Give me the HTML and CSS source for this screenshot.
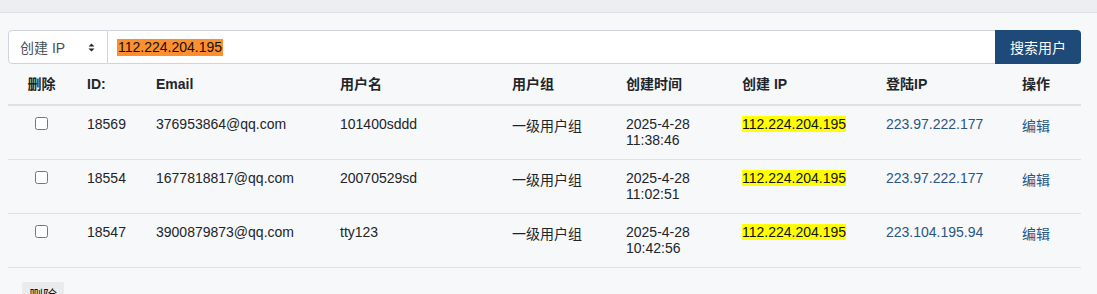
FILE: index.html
```html
<!DOCTYPE html>
<html lang="zh-CN">
<head>
<meta charset="utf-8">
<title>用户管理</title>
<link rel="stylesheet" href="styles.css">
</head>
<body>
<div class="topbar"></div>
<main class="page">
  <form class="search">
    <div class="select">
      <span>创建 IP</span>
      <svg class="caret" width="7" height="9" viewBox="0 0 7 9"><path d="M3.5 0.5 L6.5 3.5 H0.5 Z M3.5 8.5 L6.5 5.5 H0.5 Z" fill="#212529"/></svg>
    </div>
    <div class="input"><span class="picked">112.224.204.195</span></div>
    <button type="button" class="btn-search">搜索用户</button>
  </form>

  <table class="users">
    <colgroup>
      <col class="w-del"><col class="w-id"><col class="w-mail"><col class="w-name"><col class="w-group"><col class="w-time"><col class="w-ip"><col class="w-login"><col class="w-op">
    </colgroup>
    <thead>
      <tr>
        <th class="center">删除</th><th>ID:</th><th>Email</th><th>用户名</th><th>用户组</th><th>创建时间</th><th>创建 IP</th><th>登陆IP</th><th>操作</th>
      </tr>
    </thead>
    <tbody>
      <tr>
        <td class="center"><input type="checkbox" class="chk"></td>
        <td>18569</td><td>376953864@qq.com</td><td>101400sddd</td>
        <td class="cjk">一级用户组</td><td>2025-4-28<br>11:38:46</td>
        <td><mark class="hl">112.224.204.195</mark></td>
        <td class="link">223.97.222.177</td>
        <td class="cjk"><a class="link" href="#">编辑</a></td>
      </tr>
      <tr>
        <td class="center"><input type="checkbox" class="chk"></td>
        <td>18554</td><td>1677818817@qq.com</td><td>20070529sd</td>
        <td class="cjk">一级用户组</td><td>2025-4-28<br>11:02:51</td>
        <td><mark class="hl">112.224.204.195</mark></td>
        <td class="link">223.97.222.177</td>
        <td class="cjk"><a class="link" href="#">编辑</a></td>
      </tr>
      <tr>
        <td class="center"><input type="checkbox" class="chk"></td>
        <td>18547</td><td>3900879873@qq.com</td><td>tty123</td>
        <td class="cjk">一级用户组</td><td>2025-4-28<br>10:42:56</td>
        <td><mark class="hl">112.224.204.195</mark></td>
        <td class="link">223.104.195.94</td>
        <td class="cjk"><a class="link" href="#">编辑</a></td>
      </tr>
    </tbody>
  </table>

  <div class="actions">
    <button type="button" class="btn-del">删除</button>
  </div>
</main>
</body>
</html>
```

FILE: styles.css
```css
* { box-sizing: border-box; }
html, body { margin: 0; padding: 0; }
body {
  background: #f7f8fa;
  font-family: "Liberation Sans", "Noto Sans CJK SC", sans-serif;
  font-size: 14px;
  color: #212529;
  overflow: hidden;
}
.topbar {
  height: 13px;
  background: #eceef1;
  border-bottom: 1px solid #dde0e4;
}
.page {
  padding: 17px 16px 0 8px;
}
.search {
  display: flex;
  height: 34px;
  margin: 0;
}
.select {
  width: 100px;
  display: flex;
  align-items: center;
  justify-content: space-between;
  padding: 0 12px 0 11px;
  background: #fff;
  border: 1px solid #ced4da;
  border-radius: 4px 0 0 4px;
  color: #495057;
}
.caret { display: block; }
.input {
  flex: 1;
  display: flex;
  align-items: center;
  padding: 0 9px;
  background: #fff;
  border: 1px solid #ced4da;
  border-left: none;
  border-right: none;
}
.picked {
  background: #fd8f2f;
  color: #111;
  padding: 0 1px;
  line-height: 17px;
}
.btn-search {
  width: 86px;
  border: none;
  border-radius: 0 4px 4px 0;
  background: #1e4a7a;
  color: #fff;
  font: inherit;
  padding: 0;
}
.users {
  width: 1073px;
  border-collapse: collapse;
  table-layout: fixed;
}
.w-del { width: 67px; }
.w-id { width: 69px; }
.w-mail { width: 184px; }
.w-name { width: 172px; }
.w-group { width: 114px; }
.w-time { width: 116px; }
.w-ip { width: 144px; }
.w-login { width: 136px; }
.w-op { width: 71px; }
.users th {
  text-align: left;
  font-weight: bold;
  padding: 12px 12px;
  line-height: 16px;
  border-bottom: 2px solid #dee2e6;
  vertical-align: middle;
}
.users td {
  padding: 10px 12px 11px;
  line-height: 16px;
  border-bottom: 1px solid #dee2e6;
  vertical-align: top;
}
.users .center { text-align: center; }
.users td.cjk { padding-top: 12px; padding-bottom: 9px; }
.chk {
  margin: 1px 0 0;
  width: 13px;
  height: 13px;
}
.hl {
  background: #ffff00;
  color: #111;
  padding: 0;
}
.link { color: #285684; text-decoration: none; }
.actions {
  padding: 14px 0 0 14px;
}
.btn-del {
  border: none;
  background: #ebebeb;
  color: #111;
  font: inherit;
  padding: 5px 7px;
  border-radius: 2px;
  line-height: 16px;
}
```
